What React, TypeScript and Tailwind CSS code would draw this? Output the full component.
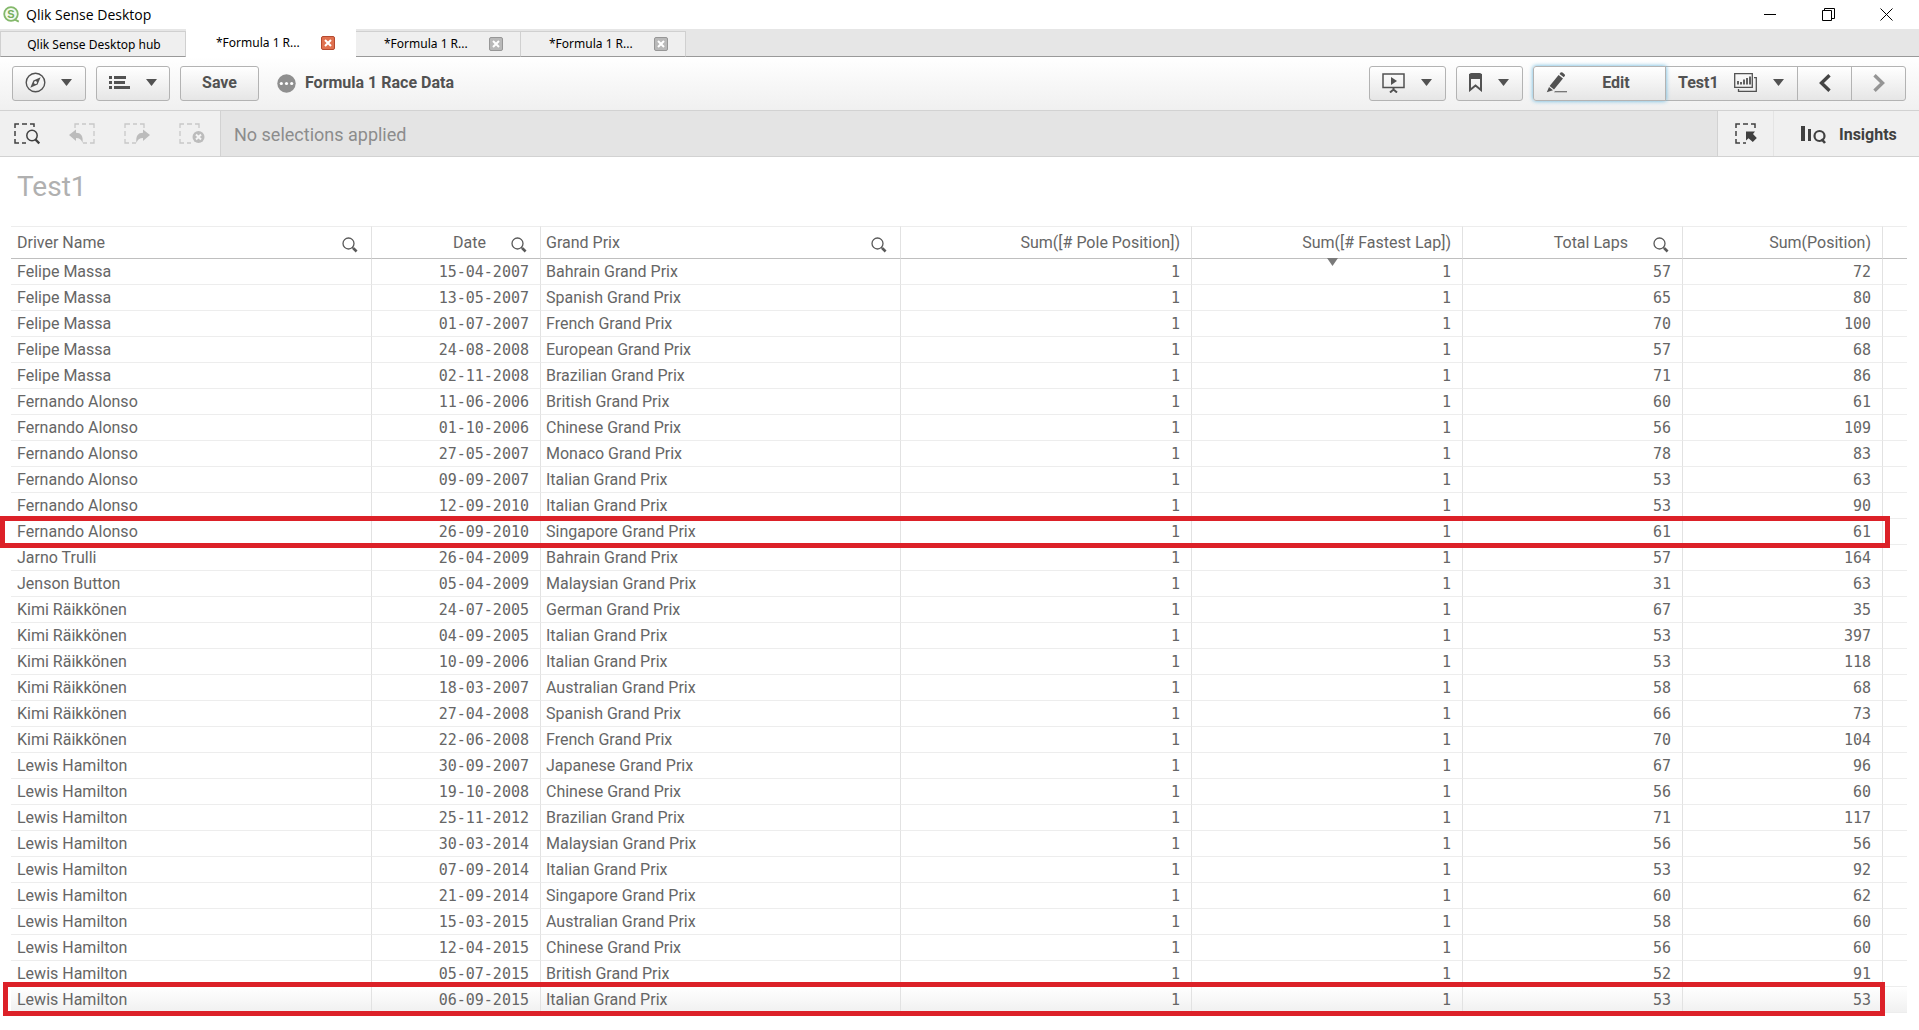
import { ReactNode } from "react";
import clsx from "clsx";

type Race = [driver: string, date: string, prix: string, laps: number, position: number];

const races: Race[] = [
  ["Felipe Massa", "15-04-2007", "Bahrain Grand Prix", 57, 72],
  ["Felipe Massa", "13-05-2007", "Spanish Grand Prix", 65, 80],
  ["Felipe Massa", "01-07-2007", "French Grand Prix", 70, 100],
  ["Felipe Massa", "24-08-2008", "European Grand Prix", 57, 68],
  ["Felipe Massa", "02-11-2008", "Brazilian Grand Prix", 71, 86],
  ["Fernando Alonso", "11-06-2006", "British Grand Prix", 60, 61],
  ["Fernando Alonso", "01-10-2006", "Chinese Grand Prix", 56, 109],
  ["Fernando Alonso", "27-05-2007", "Monaco Grand Prix", 78, 83],
  ["Fernando Alonso", "09-09-2007", "Italian Grand Prix", 53, 63],
  ["Fernando Alonso", "12-09-2010", "Italian Grand Prix", 53, 90],
  ["Fernando Alonso", "26-09-2010", "Singapore Grand Prix", 61, 61],
  ["Jarno Trulli", "26-04-2009", "Bahrain Grand Prix", 57, 164],
  ["Jenson Button", "05-04-2009", "Malaysian Grand Prix", 31, 63],
  ["Kimi Räikkönen", "24-07-2005", "German Grand Prix", 67, 35],
  ["Kimi Räikkönen", "04-09-2005", "Italian Grand Prix", 53, 397],
  ["Kimi Räikkönen", "10-09-2006", "Italian Grand Prix", 53, 118],
  ["Kimi Räikkönen", "18-03-2007", "Australian Grand Prix", 58, 68],
  ["Kimi Räikkönen", "27-04-2008", "Spanish Grand Prix", 66, 73],
  ["Kimi Räikkönen", "22-06-2008", "French Grand Prix", 70, 104],
  ["Lewis Hamilton", "30-09-2007", "Japanese Grand Prix", 67, 96],
  ["Lewis Hamilton", "19-10-2008", "Chinese Grand Prix", 56, 60],
  ["Lewis Hamilton", "25-11-2012", "Brazilian Grand Prix", 71, 117],
  ["Lewis Hamilton", "30-03-2014", "Malaysian Grand Prix", 56, 56],
  ["Lewis Hamilton", "07-09-2014", "Italian Grand Prix", 53, 92],
  ["Lewis Hamilton", "21-09-2014", "Singapore Grand Prix", 60, 62],
  ["Lewis Hamilton", "15-03-2015", "Australian Grand Prix", 58, 60],
  ["Lewis Hamilton", "12-04-2015", "Chinese Grand Prix", 56, 60],
  ["Lewis Hamilton", "05-07-2015", "British Grand Prix", 52, 91],
  ["Lewis Hamilton", "06-09-2015", "Italian Grand Prix", 53, 53],
];

// Red frame drawn over a row, keyed by the race date
const frames: Record<string, string> = {
  "26-09-2010": "-left-[11px] right-[17px] -top-[3px] -bottom-[3px]",
  "06-09-2015": "-left-2 right-[22px] -top-[5px] -bottom-[3px]",
};

const columns = [
  { label: "Driver Name", width: "w-[361px]", search: true },
  { label: "Date", width: "w-[169px]", search: true, right: true },
  { label: "Grand Prix", width: "w-auto", search: true },
  { label: "Sum([# Pole Position])", width: "w-[291px]", right: true },
  { label: "Sum([# Fastest Lap])", width: "w-[271px]", right: true, sorted: true },
  { label: "Total Laps", width: "w-[220px]", search: true, right: true },
  { label: "Sum(Position)", width: "w-[200px]", right: true },
];

const Caret = () => (
  <svg width="11" height="7" viewBox="0 0 11 7" fill="#525252" aria-hidden="true">
    <path d="M0 0h11L5.5 7z" />
  </svg>
);

const SearchIcon = () => (
  <svg width="16" height="16" viewBox="0 0 16 16" fill="none" stroke="#595959" aria-hidden="true">
    <circle cx="6.5" cy="6.5" r="5.5" strokeWidth="1.3" />
    <path d="M10.2 10.4l1.4 1.2" strokeWidth="1.4" />
    <path d="M11.3 11.3l3.3 3.2" strokeWidth="2.6" />
  </svg>
);

function QlikLogo() {
  return (
    <svg width="17" height="17" viewBox="0 0 17 17" aria-hidden="true">
      <circle cx="8" cy="8" r="6.8" fill="#f4faf0" stroke="#83b86a" strokeWidth="1.8" />
      <path d="M11.5 13.4l4.3 2.2" stroke="#83b86a" strokeWidth="1.8" />
      <text x="8" y="12" textAnchor="middle" fontSize="11" fontWeight="700" fontFamily="Liberation Sans, sans-serif" fill="#74ad5a">
        S
      </text>
    </svg>
  );
}

function TitleBar() {
  return (
    <header className="flex h-[29px] items-center bg-white pl-[3px] pr-1 font-['Open_Sans',sans-serif]">
      <QlikLogo />
      <span className="ml-1.5 text-sm text-black">Qlik Sense Desktop</span>
      <div className="ml-auto flex">
        <button aria-label="Minimize" className="flex h-7 w-[58px] items-center justify-center">
          <svg width="12" height="12" viewBox="0 0 12 12" stroke="#000"><path d="M0 5.5h12" /></svg>
        </button>
        <button aria-label="Restore" className="flex h-7 w-[58px] items-center justify-center">
          <svg width="13" height="13" viewBox="0 0 13 13" fill="none" stroke="#000">
            <path d="M.5 2.5h9v10h-9zM2.5 2.5v-2h10v10h-3" />
          </svg>
        </button>
        <button aria-label="Close" className="flex h-7 w-[58px] items-center justify-center">
          <svg width="13" height="13" viewBox="0 0 13 13" stroke="#000"><path d="M.5.5l12 12M12.5.5l-12 12" /></svg>
        </button>
      </div>
    </header>
  );
}

function AppTab({ active }: { active?: boolean }) {
  return (
    <div
      className={clsx(
        "flex items-center text-black",
        active
          ? "h-7 w-[170px] bg-white pl-[30px] pr-[21px]"
          : "h-[26px] w-[165px] border-r border-t border-b border-r-[#d0d0d0] border-t-[#d0d0d0] border-b-[#999] bg-[#efefef] pl-7 pr-[17px]"
      )}
    >
      <button>*Formula 1 R...</button>
      <button
        aria-label="Close tab"
        className={clsx(
          "ml-auto flex size-[14px] items-center justify-center rounded-xs border",
          active ? "border-[#b5492f] bg-[#e0714f]" : "border-[#979797] bg-[#b9b9b9]"
        )}
      >
        <svg width="8" height="8" viewBox="0 0 8 8" stroke="#fff" strokeWidth="2"><path d="M1 1l6 6M7 1L1 7" /></svg>
      </button>
    </div>
  );
}

function TabStrip() {
  return (
    <nav className="flex h-7 items-end bg-[#e6e6e6] font-['Noto_Sans',sans-serif] text-xs">
      <button className="h-[26px] w-[186px] border border-[#d0d0d0] border-b-[#999] bg-[#efefef] pl-0.5 pt-px text-black">
        Qlik Sense Desktop hub
      </button>
      <AppTab active />
      <AppTab />
      <AppTab />
      <div className="h-7 flex-1 border-b border-[#999]" />
    </nav>
  );
}

function ToolButton({ className, label, children }: { className: string; label?: string; children: ReactNode }) {
  return (
    <button
      aria-label={label}
      className={clsx(
        "flex h-[35px] items-center border border-[#b3b3b3] bg-linear-to-b from-white to-[#e6e6e6] pb-0.5",
        className
      )}
    >
      {children}
    </button>
  );
}

function Toolbar() {
  return (
    <div className="flex h-[54px] items-center border-b border-[#d2d2d2] bg-linear-to-b from-white to-[#f0f0f0] pl-3 pr-[13px] text-base font-bold text-[#525252]">
      <div className="flex gap-2.5">
        <ToolButton label="Navigation" className="w-[74px] justify-between rounded-[3px] pl-3 pr-[13px]">
          <svg width="21" height="21" viewBox="0 0 21 21" fill="none" stroke="#525252" strokeWidth="1.4">
            <circle cx="10.5" cy="10.5" r="9.3" />
            <path d="M15.6 5.2l-3 7.4-7.3 3.2 3.1-7.4z" fill="#525252" stroke="none" />
            <circle cx="10.5" cy="10.5" r="1.5" fill="#f5f5f5" stroke="none" />
          </svg>
          <Caret />
        </ToolButton>
        <ToolButton label="Global menu" className="w-[74px] justify-between rounded-[3px] px-3">
          <svg width="21" height="14" viewBox="0 0 21 14" fill="#525252">
            <path d="M0 0h3v3H0zM0 5h3v3H0zM0 10h3v3H0zM5 0h12v3H5zM5 5h11v3H5zM5 10h16v3H5z" />
          </svg>
          <Caret />
        </ToolButton>
        <ToolButton className="w-[79px] justify-center rounded-[3px]">Save</ToolButton>
      </div>
      <svg className="ml-[18px]" width="19" height="19" viewBox="0 0 19 19" aria-hidden="true">
        <circle cx="9.5" cy="9.5" r="9.2" fill="#8f8f8f" />
        <g fill="#fff">
          <circle cx="4.3" cy="9.5" r="1.6" />
          <circle cx="9.5" cy="9.5" r="1.6" />
          <circle cx="14.7" cy="9.5" r="1.6" />
        </g>
      </svg>
      <h1 className="ml-[9px] pb-0.5">Formula 1 Race Data</h1>

      <div className="ml-auto flex gap-2.5">
        <ToolButton label="Storytelling" className="w-[77px] justify-between rounded-[3px] pl-3 pr-[13px]">
          <svg width="23" height="20" viewBox="0 0 23 20" fill="none" stroke="#525252">
            <path d="M1 1h21v13.5H1z" strokeWidth="1.5" />
            <path d="M9 4l6 4-6 4z" fill="#525252" stroke="none" />
            <path d="M11.5 15v2M8 19.5l3.5-3 3.5 3" strokeWidth="2" />
          </svg>
          <Caret />
        </ToolButton>
        <ToolButton label="Bookmarks" className="w-[67px] justify-between rounded-[3px] pl-3 pr-[13px]">
          <svg width="13" height="19" viewBox="0 0 13 19" fill="none" stroke="#525252">
            <path d="M1 2v15l5.5-4.5L12 17V2z" strokeWidth="2" />
            <path d="M0 2.5A2.5 2.5 0 012.5 0h8A2.5 2.5 0 0113 2.5V6H0z" fill="#525252" stroke="none" />
          </svg>
          <Caret />
        </ToolButton>
        <div className="flex">
          <ToolButton className="z-10 w-[133px] rounded-l-[3px] border-[#4f93b8] pl-3 shadow-[0_0_4px_#5fb4dd]">
            <svg width="21" height="21" viewBox="0 0 21 21" fill="#525252">
              <path d="M12.6 3l4.4 3.5L8 17.6l-4.4-3.5zM13.5 1.9l1.1-1.3q.9-.8 1.9 0L18.500 2.200q.9.9.2 1.900l-.9 1.200zM3 15l4 3.200L.8 20.300zM9 19.300h12v1H8z" />
            </svg>
            <span className="flex-1 text-center">Edit</span>
          </ToolButton>
          <ToolButton className="-ml-px w-[133px] justify-between pl-3 pr-[13px]">
            Test1
            <span className="flex items-center gap-4">
              <svg width="23" height="19" viewBox="0 0 23 19" fill="none" stroke="#525252">
                <path d="M.7.7h17.600v13.600H.7z" strokeWidth="1.300" />
                <path d="M20 4.700h2.300v13.600H4.500V16" strokeWidth="1.300" />
                <path d="M4 11.500V8M7 11.500V9M10 11.500V6.500M13 11.500V5M16 11.500V3.500" strokeWidth="1.800" />
              </svg>
              <Caret />
            </span>
          </ToolButton>
          <ToolButton label="Previous sheet" className="-ml-px w-[55px] justify-center">
            <svg width="12" height="18" viewBox="0 0 12 18" fill="none" stroke="#444" strokeWidth="3.400"><path d="M10.500 1.300L2.500 9l8 7.700" /></svg>
          </ToolButton>
          <ToolButton label="Next sheet" className="-ml-px w-[55px] justify-center rounded-r-[3px]">
            <svg width="12" height="18" viewBox="0 0 12 18" fill="none" stroke="#959595" strokeWidth="3.400"><path d="M1.500 1.300l8 7.700-8 7.700" /></svg>
          </ToolButton>
        </div>
      </div>
    </div>
  );
}

function SelectionBar() {
  const tool = "flex w-[55px] items-center justify-center pr-0.5";
  return (
    <div className="flex h-[46px] border-b border-[#d2d2d2] bg-[#f0f0f0]">
      <div className="flex w-[221px] border-r border-[#d2d2d2]">
        <button aria-label="Smart search" className={tool}>
          <svg width="26" height="22" viewBox="0 0 26 22" fill="none" stroke="#404040" strokeWidth="1.500">
            <path d="M1 5V1h4M8 1h5M16 1h4v3M1 8v5M1 16v4h4M8 20h4" />
            <circle cx="18" cy="12.500" r="5.200" />
            <path d="M21.500 16.500l3.800 4" strokeWidth="2.400" />
          </svg>
        </button>
        <button aria-label="Step back" disabled className={tool}>
          <svg width="26" height="22" viewBox="0 0 26 22" fill="none" stroke="#c8c8c8" strokeWidth="1.300">
            <path d="M6 5V1h4M13 1h4M20 1h5v4M25 8v5M25 16v4h-4M18 20h-4" />
            <path d="M0 12l7-5.500v3.300c5 0 7.500 3.200 6.500 10.200-1-3.500-3-5-6.500-5v3z" fill="#bcbcbc" stroke="none" />
          </svg>
        </button>
        <button aria-label="Step forward" disabled className={tool}>
          <svg width="26" height="22" viewBox="0 0 26 22" fill="none" stroke="#c8c8c8" strokeWidth="1.300">
            <path d="M20 5V1h-4M13 1H9M6 1H1v4M1 8v5M1 16v4h4M8 20h4" />
            <path d="M26 12l-7-5.500v3.300c-5 0-7.500 3.200-6.500 10.200 1-3.500 3-5 6.500-5v3z" fill="#bcbcbc" stroke="none" />
          </svg>
        </button>
        <button aria-label="Clear all selections" disabled className={tool}>
          <svg width="26" height="22" viewBox="0 0 26 22" fill="none" stroke="#c8c8c8" strokeWidth="1.300">
            <path d="M1 5V1h4M8 1h5M16 1h4v4M1 8v5M1 16v4h4M8 20h4" />
            <circle cx="19.500" cy="14" r="6" fill="#bcbcbc" stroke="none" />
            <path d="M17 11.500l5 5M22 11.500l-5 5" stroke="#f4f4f4" strokeWidth="2" />
          </svg>
        </button>
      </div>
      <p className="flex flex-1 items-center bg-[#e4e4e4] pl-[13px] pt-0.5 text-lg text-[#8c8c8c]">No selections applied</p>
      <button aria-label="Selections tool" className="flex w-[57px] items-center justify-center border-x border-l-[#d2d2d2] border-r-[#e4e4e4]">
        <svg width="22" height="22" viewBox="0 0 22 22" fill="none" stroke="#404040" strokeWidth="1.500">
          <path d="M1 5V1h4M8 1h5M16 1h4v4M1 8v5M1 16v4h4M8 20h3" />
          <path d="M11 8.500h9l-2 2.500 3.800 4-4 4-4.300-3.800-2.500 2.300z" fill="#404040" stroke="none" />
        </svg>
      </button>
      <button className="flex w-[145px] items-center gap-3 pl-[27px] pt-0.5 text-base font-bold text-[#404040]">
        <svg width="26" height="20" viewBox="0 0 26 20" fill="#404040">
          <path d="M0 1h4v15H0zM7 4h3v12H7z" />
          <circle cx="18.500" cy="11" r="5" fill="none" stroke="#404040" strokeWidth="2.200" />
          <path d="M20.500 14l3.500 4" stroke="#404040" strokeWidth="2.600" />
        </svg>
        Insights
      </button>
    </div>
  );
}

function RaceTable() {
  const cell = "border-b border-r border-b-[#ededed] border-r-[#e2e2e2]";
  const text = clsx(cell, "pl-1.5 nth-3:pl-[5px]");
  const num = clsx(cell, "pr-[11px] pt-px text-right font-['DejaVu_Sans_Mono',monospace] text-[15px]");
  return (
    <table className="w-full table-fixed border-separate border-spacing-0 text-base text-[#666]">
      <thead>
        <tr className="h-[33px]">
          {columns.map((col) => (
            <th
              key={col.label}
              scope="col"
              className={clsx(
                "relative border-y border-r border-t-[#ededed] border-b-[#bfbfbf] border-r-[#e2e2e2] pl-1.5 font-normal nth-3:pl-[5px]",
                col.search ? "pr-[13px]" : "pr-[11px]",
                col.width
              )}
            >
              <div className={clsx("flex items-center", col.right ? "justify-end" : "justify-between")}>
                <span>{col.label}</span>
                {col.search && (
                  <button aria-label={`Search ${col.label}`} className="ml-[25px] pt-1">
                    <SearchIcon />
                  </button>
                )}
              </div>
              {col.sorted && (
                <svg className="absolute left-1/2 top-full" width="11" height="8" viewBox="0 0 11 8" fill="#7a7a7a">
                  <path d="M0 0h11L5.500 8z" />
                </svg>
              )}
            </th>
          ))}
          <td className="w-6 border-y border-t-[#ededed] border-b-[#bfbfbf]" />
        </tr>
      </thead>
      <tbody>
        {races.map(([driver, date, prix, laps, position]) => (
          <tr
            key={driver + date}
            className="relative h-[26px] leading-6 last:bg-linear-to-b last:from-white last:to-[#f0f0f0]"
          >
            <td className={text}>
              {driver}
              {frames[date] && (
                <span className={clsx("pointer-events-none absolute z-10 border-[5px] border-[#dc2128]", frames[date])} />
              )}
            </td>
            <td className={num}>{date}</td>
            <td className={text}>{prix}</td>
            <td className={num}>1</td>
            <td className={num}>1</td>
            <td className={num}>{laps}</td>
            <td className={num}>{position}</td>
            <td className="border-b border-b-[#ededed]" />
          </tr>
        ))}
      </tbody>
    </table>
  );
}

export default function App() {
  return (
    <div className="min-h-screen bg-white font-[Roboto,sans-serif]">
      <TitleBar />
      <TabStrip />
      <Toolbar />
      <SelectionBar />
      <main className="pl-[11px] pr-3">
        <h2 className="h-[69px] pl-1.5 pt-3 text-[28px] leading-9 text-[#b0b0b0]">Test1</h2>
        <RaceTable />
      </main>
    </div>
  );
}
